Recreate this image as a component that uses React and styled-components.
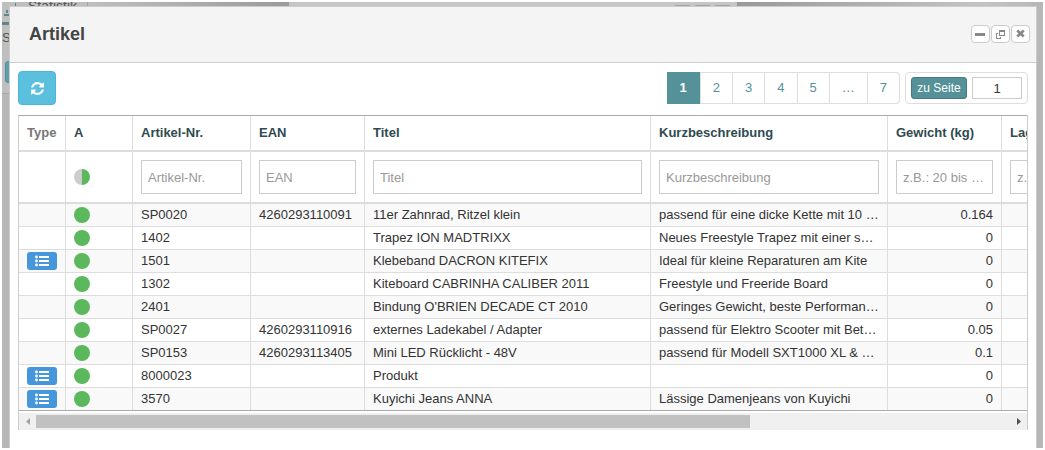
import React from "react";
import styled, { createGlobalStyle, css } from "styled-components";

const GlobalStyle = createGlobalStyle`
  *, *::before, *::after { box-sizing: border-box; }
  body {
    margin: 0;
    background: #fff;
    color: #333;
    font: 13px/20px "Liberation Sans", Arial, sans-serif;
  }
  button, input { font: inherit; }
`;

const Page = styled.div`
  display: grid;
  height: 100vh;
  padding: 2px;
`;

const Desktop = styled.div`
  position: relative;
  display: flex;
  overflow: hidden;
  padding: 4px 6px 0 7px;
  background: #b7b7b7;
`;

const Behind = styled.div`
  position: absolute;
  inset: 0 auto auto 0;
  width: 288px;
  height: 92px;
  border-bottom: 1px solid #a8a8a8;
  background: linear-gradient(90deg, #bfbfbf 30%, #9a9a9a 100%);
  color: #555;
  overflow: hidden;
`;

const BehindTab = styled.div`
  display: flex;
  align-items: flex-start;
  gap: 12px;
  width: 86px;
  height: 23px;
  margin-bottom: 3px;
  border-right: 1px solid #a5a5a5;
  border-bottom: 3px solid #5f868c;
  line-height: 8px;
  font-size: 14px;
`;

const BehindButton = styled.div`
  width: 30px;
  height: 22px;
  margin: 13px 0 0 3px;
  border: 1px solid #4593a8;
  border-radius: 3px;
  background: #659cab;
`;

const BehindWindow = styled.div`
  position: absolute;
  top: 0;
  left: 287px;
  right: 306px;
  display: flex;
  align-items: flex-end;
  justify-content: flex-end;
  gap: 5px;
  height: 4px;
  padding-right: 7px;
  background: #c6c6c6;
`;

const BehindWindowButton = styled.span`
  width: 15px;
  height: 1px;
  background: #a3a3a3;
`;

const BehindShade = styled.div`
  position: absolute;
  top: 0;
  right: 0;
  width: 306px;
  height: 4px;
  background: linear-gradient(90deg, #999 0%, #c4c4c4 80%, #b7b7b7 100%);
`;

const Dialog = styled.section`
  position: relative;
  display: flex;
  flex: 1;
  flex-direction: column;
  min-width: 0;
  border: 1px solid #ccc;
  border-bottom: 0;
  background: #fff;
`;

const DialogHeader = styled.header`
  display: flex;
  align-items: center;
  justify-content: space-between;
  height: 56px;
  padding: 0 6px 2px 19px;
  border-bottom: 1px solid #ccc;
  background: #f4f4f4;
`;

const Title = styled.h1`
  margin: 0;
  color: #444;
  font-size: 18px;
  line-height: 24px;
`;

const WindowButtons = styled.div`
  display: flex;
  gap: 1px;
`;

const WindowButton = styled.button`
  display: grid;
  place-items: center;
  width: 19px;
  height: 18px;
  padding: 0;
  border: 1px solid #ccc;
  border-radius: 4px;
  background: #fff;
  color: #888;
`;

const DialogBody = styled.div`
  padding: 8px;
`;

const Toolbar = styled.div`
  display: flex;
  align-items: center;
  justify-content: space-between;
  margin-bottom: 10px;
`;

const RefreshButton = styled.button`
  display: grid;
  place-items: center;
  width: 38px;
  height: 34px;
  padding: 0;
  border: 1px solid #46b8da;
  border-radius: 4px;
  background: #5bc0de;
  color: #fff;
`;

const Paging = styled.div`
  display: flex;
  gap: 5px;
`;

const PageList = styled.nav`
  display: flex;
  height: 32px;
  border: 1px solid #ddd;
  border-left: 0;
  border-radius: 0 4px 4px 0;
`;

const PageLink = styled.a`
  padding: 5px 12px;
  color: #549199;
  text-decoration: none;
  & + & { border-left: 1px solid #ddd; }
  ${(p) =>
    p.$active &&
    css`
      margin: -1px 0;
      padding: 6px 13px;
      background: #549199;
      color: #fff;
      font-weight: bold;
    `}
`;

const PageJump = styled.form`
  display: flex;
  align-items: center;
  gap: 5px;
  height: 32px;
  padding: 0 5px;
  border: 1px solid #ddd;
  border-radius: 4px;
`;

const JumpButton = styled.button`
  width: 56px;
  height: 22px;
  padding: 0;
  border: 1px solid #457a80;
  border-radius: 3px;
  background: #549199;
  color: #fff;
  font-size: 12px;
`;

const JumpInput = styled.input`
  width: 50px;
  height: 22px;
  padding: 0;
  border: 1px solid #ccc;
  border-radius: 0;
  color: #333;
  text-align: center;
`;

const Scroller = styled.div`
  border: solid #ccc;
  border-width: 0 1px;
`;

const TableClip = styled.div`
  overflow: hidden;
`;

const Table = styled.table`
  width: 1377px;
  table-layout: fixed;
  border-collapse: separate;
  border-spacing: 0;
  border: solid #aaa;
  border-width: 1px 0;
`;

const HeadCell = styled.th`
  height: 36px;
  padding: 0 8px;
  border-right: 1px solid #ddd;
  border-bottom: 2px solid #ddd;
  color: ${(p) => (p.$muted ? "#777" : "#2f4a50")};
  text-align: left;
  white-space: nowrap;
`;

const FilterCell = styled.td`
  height: 52px;
  padding: 0 8px;
  border-right: 1px solid #ddd;
  border-bottom: 2px solid #ddd;
  vertical-align: middle;
`;

const FilterInput = styled.input`
  display: block;
  width: 100%;
  height: 34px;
  padding: 0 6px;
  border: 1px solid #ccc;
  border-radius: 0;
  text-overflow: ellipsis;
  &::placeholder { color: #999; opacity: 1; }
`;

const Row = styled.tr`
  &:nth-child(odd) { background: #f9f9f9; }
  &:last-child td { height: 22px; border-bottom: 0; }
`;

const Cell = styled.td`
  height: 23px;
  padding: 0 8px;
  border-right: 1px solid #ddd;
  border-bottom: 1px solid #ddd;
  overflow: hidden;
  text-align: ${(p) => (p.$number ? "right" : "left")};
  text-overflow: ellipsis;
  white-space: nowrap;
`;

const Status = styled.span`
  display: block;
  width: 16px;
  height: 16px;
  border-radius: 50%;
  background: ${(p) =>
    p.$half ? "linear-gradient(90deg, #ccc 50%, #5cb85c 50%)" : "#5cb85c"};
`;

const TypeButton = styled.button`
  display: grid;
  place-items: center;
  width: 30px;
  height: 18px;
  padding: 0;
  border: 0;
  border-radius: 3px;
  background: #4596db;
  color: #fff;
`;

const ScrollBar = styled.div`
  display: flex;
  align-items: center;
  height: 17px;
  margin-top: 2px;
  background: #f0f0f0;
`;

const ScrollArrow = styled.svg`
  flex: none;
  width: 17px;
  height: 17px;
  fill: ${(p) => (p.$dim ? "#a3a3a3" : "#505050")};
`;

const ScrollTrack = styled.div`
  display: grid;
  flex: 1;
  grid-template-columns: 11fr 4fr;
  height: 13px;
`;

const ScrollThumb = styled.div`
  background: #c1c1c1;
`;

const columns = [
  { label: "Type", width: 47 },
  { label: "A", width: 67 },
  { label: "Artikel-Nr.", width: 118, hint: "Artikel-Nr." },
  { label: "EAN", width: 114, hint: "EAN" },
  { label: "Titel", width: 286, hint: "Titel" },
  { label: "Kurzbeschreibung", width: 237, hint: "Kurzbeschreibung" },
  { label: "Gewicht (kg)", width: 114, hint: "z.B.: 20 bis 100" },
  { label: "Lagerbestand", width: 394, hint: "z.B.: 20 bis 100" },
];

const articles = [
  ["", "SP0020", "4260293110091", "11er Zahnrad, Ritzel klein", "passend für eine dicke Kette mit 10 mm Breite", "0.164"],
  ["", "1402", "", "Trapez ION MADTRIXX", "Neues Freestyle Trapez mit einer sehr guten", "0"],
  ["list", "1501", "", "Klebeband DACRON KITEFIX", "Ideal für kleine Reparaturen am Kite", "0"],
  ["", "1302", "", "Kiteboard CABRINHA CALIBER 2011", "Freestyle und Freeride Board", "0"],
  ["", "2401", "", "Bindung O'BRIEN DECADE CT 2010", "Geringes Gewicht, beste Performance und", "0"],
  ["", "SP0027", "4260293110916", "externes Ladekabel / Adapter", "passend für Elektro Scooter mit Betrieb", "0.05"],
  ["", "SP0153", "4260293113405", "Mini LED Rücklicht - 48V", "passend für Modell SXT1000 XL & SXT500", "0.1"],
  ["list", "8000023", "", "Produkt", "", "0"],
  ["list", "3570", "", "Kuyichi Jeans ANNA", "Lässige Damenjeans von Kuyichi", "0"],
];

const RefreshIcon = () => (
  <svg width="13" height="13" viewBox="0 0 1536 1536" fill="currentColor" aria-hidden="true">
    <path d="M1511 928q0 5-1 7-64 268-268 434.5t-478 166.5q-146 0-282.5-55t-243.5-157l-129 129q-19 19-45 19t-45-19-19-45v-448q0-26 19-45t45-19h448q26 0 45 19t19 45-19 45l-137 137q71 66 161 102t187 36q134 0 250-65t186-179q11-17 53-117 8-23 30-23h192q13 0 22.5 9.5t9.5 22.5zM1536 128v448q0 26-19 45t-45 19h-448q-26 0-45-19t-19-45 19-45l138-138q-148-137-349-137-134 0-250 65t-186 179q-11 17-53 117-8 23-30 23h-199q-13 0-22.5-9.5t-9.5-22.5v-7q65-268 270-434.5t480-166.5q146 0 284 55.5t245 156.5l130-129q19-19 45-19t45 19 19 45z" />
  </svg>
);

const ListIcon = () => (
  <svg width="14" height="12" viewBox="0 0 14 12" fill="currentColor" aria-hidden="true">
    <circle cx="1.5" cy="2" r="1.4" />
    <circle cx="1.5" cy="6" r="1.4" />
    <circle cx="1.5" cy="10" r="1.4" />
    <path d="M4 1h10v2H4zM4 5h10v2H4zM4 9h10v2H4z" />
  </svg>
);

const ChartIcon = () => (
  <svg width="14" height="14" viewBox="0 0 14 14" fill="#5f868c" aria-hidden="true">
    <path d="M13 1h1v4h-1zM4 8h2v3H4zM2 12h12v2H2z" />
  </svg>
);

export default function App() {
  return (
    <>
      <GlobalStyle />
      <Page>
        <Desktop>
          <Behind>
            <BehindTab>
              <ChartIcon />
              Statistik
            </BehindTab>
            S
            <BehindButton />
          </Behind>
          <BehindWindow>
            <BehindWindowButton />
            <BehindWindowButton />
            <BehindWindowButton />
          </BehindWindow>
          <BehindShade />
          <Dialog aria-labelledby="dialog-title">
            <DialogHeader>
              <Title id="dialog-title">Artikel</Title>
              <WindowButtons>
                <WindowButton type="button" aria-label="Minimieren">
                  <svg width="11" height="10" viewBox="0 0 11 10" fill="currentColor">
                    <rect x="0" y="4" width="10" height="3" />
                  </svg>
                </WindowButton>
                <WindowButton type="button" aria-label="Maximieren">
                  <svg width="11" height="10" viewBox="0 0 11 10" fill="currentColor">
                    <path d="M4 1h6v6H4zM5 3v3h4V3z M1 4h2v1H2v4h3V8h1v2H1z" fillRule="evenodd" />
                  </svg>
                </WindowButton>
                <WindowButton type="button" aria-label="Schließen">
                  <svg width="9" height="9" viewBox="0 0 9 9" fill="none" stroke="currentColor" strokeWidth="2.6">
                    <path d="M1.2 1.5l6.6 6M7.8 1.5l-6.6 6" />
                  </svg>
                </WindowButton>
              </WindowButtons>
            </DialogHeader>
            <DialogBody>
              <Toolbar>
                <RefreshButton type="button" aria-label="Aktualisieren">
                  <RefreshIcon />
                </RefreshButton>
                <Paging>
                  <PageList aria-label="Seiten">
                    {["1", "2", "3", "4", "5", "…", "7"].map((n) => (
                      <PageLink key={n} href="#" $active={n === "1"}>
                        {n}
                      </PageLink>
                    ))}
                  </PageList>
                  <PageJump onSubmit={(e) => e.preventDefault()}>
                    <JumpButton type="submit">zu Seite</JumpButton>
                    <JumpInput type="text" aria-label="Seite" defaultValue="1" />
                  </PageJump>
                </Paging>
              </Toolbar>
              <Scroller>
                <TableClip>
                  <Table>
                    <colgroup>
                      {columns.map((c) => (
                        <col key={c.label} style={{ width: c.width }} />
                      ))}
                    </colgroup>
                    <thead>
                      <tr>
                        {columns.map((c, i) => (
                          <HeadCell key={c.label} scope="col" $muted={i === 0}>
                            {c.label}
                          </HeadCell>
                        ))}
                      </tr>
                      <tr>
                        {columns.map((c, i) => (
                          <FilterCell key={c.label}>
                            {i === 1 && <Status $half />}
                            {c.hint && (
                              <FilterInput type="text" aria-label={c.label} placeholder={c.hint} />
                            )}
                          </FilterCell>
                        ))}
                      </tr>
                    </thead>
                    <tbody>
                      {articles.map(([type, number, ean, title, text, weight]) => (
                        <Row key={number}>
                          <Cell>
                            {type && (
                              <TypeButton type="button" aria-label="Varianten">
                                <ListIcon />
                              </TypeButton>
                            )}
                          </Cell>
                          <Cell>
                            <Status />
                          </Cell>
                          <Cell>{number}</Cell>
                          <Cell>{ean}</Cell>
                          <Cell>{title}</Cell>
                          <Cell>{text}</Cell>
                          <Cell $number>{weight}</Cell>
                          <Cell />
                        </Row>
                      ))}
                    </tbody>
                  </Table>
                </TableClip>
                <ScrollBar>
                  <ScrollArrow $dim viewBox="0 0 17 17">
                    <path d="M11 5v7L7 8.5z" />
                  </ScrollArrow>
                  <ScrollTrack>
                    <ScrollThumb />
                  </ScrollTrack>
                  <ScrollArrow viewBox="0 0 17 17">
                    <path d="M7 5v7l4-3.5z" />
                  </ScrollArrow>
                </ScrollBar>
              </Scroller>
            </DialogBody>
          </Dialog>
        </Desktop>
      </Page>
    </>
  );
}
